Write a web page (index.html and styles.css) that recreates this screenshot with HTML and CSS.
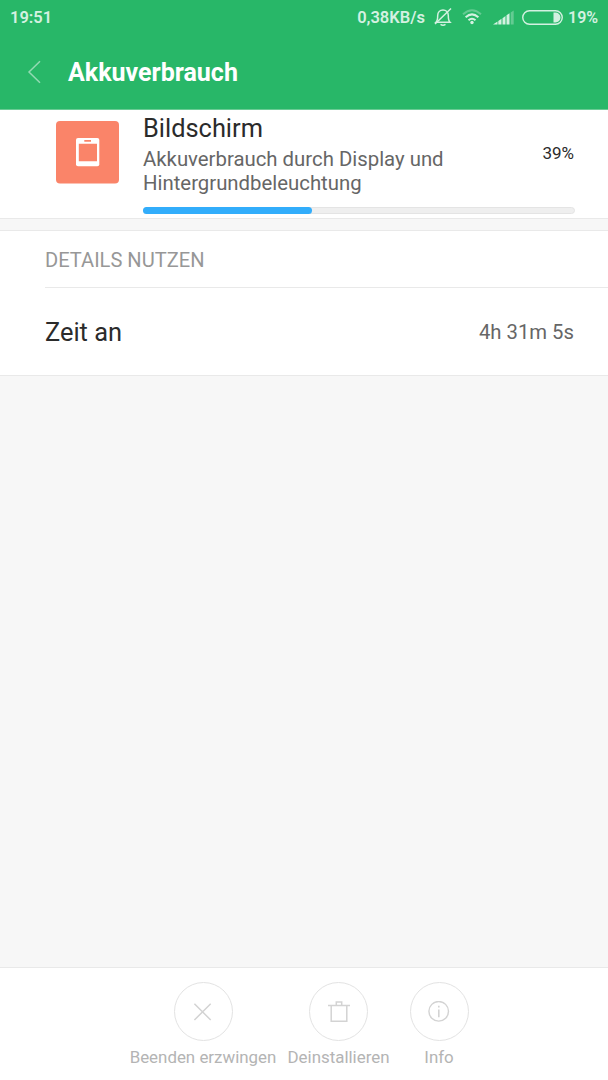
FILE: index.html
```html
<!DOCTYPE html>
<html lang="de">
<head>
<meta charset="utf-8">
<title>Akkuverbrauch</title>
<link rel="stylesheet" href="styles.css">
</head>
<body>
<div class="screen">
  <header class="header">
    <div class="status">
      <span class="clock">19:51</span>
      <span class="speed">0,38KB/s</span>
      <svg class="bell" width="18" height="20" viewBox="0 0 18 20" fill="none" stroke="#d4f1e1" stroke-width="1.5">
        <path d="M2 15.3H16C14.5 13.8 14.3 12 14.3 8.5C14.3 5.3 12 3 9 3S3.7 5.3 3.7 8.5C3.7 12 3.5 13.8 2 15.3Z"/>
        <path d="M6.5 17.3Q9 19 11.5 17.3M1 17L17 1.5"/>
      </svg>
      <svg class="wifi" width="20" height="16" viewBox="0 0 20 16" fill="none" stroke="#d4f1e1" stroke-width="2">
        <path d="M1 5.2Q10-2.7 19 5.2" opacity=".35"/>
        <path d="M3.6 8.2Q10 2.6 16.4 8.2M6.5 11.3Q10 8.2 13.5 11.3"/>
        <circle cx="10" cy="13.5" r="1.7" fill="#d4f1e1" stroke="none"/>
      </svg>
      <svg class="signal" width="21" height="15" viewBox="0 0 21 15" fill="#d4f1e1">
        <path d="M0 14.5L4.5 11.5V14.5ZM5.3 11L8.5 8.8V14.5H5.3ZM9.5 8.2L12.5 6V14.5H9.5ZM13.5 5.3L16.5 3.2V14.5H13.5Z"/>
        <path d="M17.7 2.5L20.7 .5V14.5H17.7Z" opacity=".35"/>
      </svg>
      <svg class="battery" width="41" height="15" viewBox="0 0 41 15">
        <rect x=".75" y=".75" width="39.5" height="13.5" rx="6.75" fill="none" stroke="#d4f1e1" stroke-width="1.4"/>
        <path d="M31.5 2.5H33.5A5 5 0 0 1 33.5 12.5H31.5Z" fill="#d4f1e1"/>
      </svg>
      <span class="level">19%</span>
    </div>
    <div class="titlebar">
      <svg class="back" width="14" height="24" viewBox="0 0 14 24" fill="none" stroke="#93dab3" stroke-width="1.5"><path d="M13 1.2L2 12L13 22.8"/></svg>
      <h1 class="title">Akkuverbrauch</h1>
    </div>
  </header>
  <section class="summary">
    <svg class="app-icon" width="63" height="63" viewBox="0 0 63 63">
      <rect width="63" height="62.5" rx="4" fill="#fa8469"/>
      <rect x="20" y="17" width="23.3" height="28.3" rx="2" fill="#fff"/>
      <path d="M22.8 22.7H41V40.3H22.8ZM28.3 19H35V20.8H28.3Z" fill="#fa8469"/>
    </svg>
    <div class="info">
      <div class="info-row">
        <div>
          <h2 class="name">Bildschirm</h2>
          <p class="desc">Akkuverbrauch durch Display und<br>Hintergrundbeleuchtung</p>
        </div>
        <span class="percent">39%</span>
      </div>
      <div class="track"><div class="fill" style="width:39.2%"></div></div>
    </div>
  </section>
  <section class="details">
    <h3 class="heading">DETAILS NUTZEN</h3>
    <div class="row"><span class="label">Zeit an</span><span class="value">4h 31m 5s</span></div>
  </section>
  <footer class="actions">
    <div class="action force">
      <span class="ring"><svg width="22" height="22" viewBox="0 0 22 22" fill="none" stroke="#d3d3d3" stroke-width="1.5"><path d="M2.4 2.7L18.7 19M18.7 2.7L2.4 19"/></svg></span>
      <span class="caption">Beenden erzwingen</span>
    </div>
    <div class="action uninstall">
      <span class="ring"><svg width="22" height="22" viewBox="0 0 22 22" fill="none" stroke="#d3d3d3" stroke-width="1.5"><path d="M0 4.5H22M3.2 4.5V20.2H18.8V4.5M8.3 4.5V1H13.7V4.5"/></svg></span>
      <span class="caption">Deinstallieren</span>
    </div>
    <div class="action about">
      <span class="ring"><svg width="22" height="22" viewBox="0 0 22 22" fill="none" stroke="#d3d3d3" stroke-width="1.4"><circle cx="10.7" cy="10.3" r="9.8"/><path d="M10.8 8.5V16.3M10.8 4.7V6.5" stroke-width="1.6"/></svg></span>
      <span class="caption">Info</span>
    </div>
  </footer>
</div>
</body>
</html>
```
FILE: styles.css
```css
* { box-sizing: border-box; }
body { margin: 0; font-family: Roboto, "Liberation Sans", sans-serif; }
h1, h2, h3, p { margin: 0; font-weight: 400; }
svg { display: block; flex: none; }
.screen { width: 608px; height: 1080px; display: flex; flex-direction: column; background: #f7f7f7; overflow: hidden; }
.header { height: 110px; background: #28b768; border-bottom: 1px solid #6acb94; flex: none; }
.status { height: 34px; padding: 0 10px; display: flex; align-items: center; color: #d4f1e1; font-size: 16.5px; font-weight: 600; white-space: nowrap; }
.clock { margin-right: auto; }
.speed { margin-right: 9px; }
.bell { margin-right: 10px; }
.wifi { margin-right: 11px; }
.signal { margin-right: 8px; }
.battery { margin-right: 5px; }
.level { width: 30px; font-size: 16px; }
.titlebar { height: 75px; padding: 1px 0 0 27px; display: flex; align-items: center; }
.back { margin-right: 27px; }
.title { font-size: 25px; font-weight: 700; color: #fff; line-height: 30px; padding-top: 2px; }
.summary { height: 109px; flex: none; background: #fff; border-bottom: 1px solid #e9e9e9; padding: 0 33px 0 56px; display: flex; }
.app-icon { margin: 11px 24px 0 0; }
.info { flex: 1; padding-top: 2px; }
.info-row { display: flex; justify-content: space-between; height: 95px; }
.name { font-size: 25.4px; line-height: 32px; color: #2b2b2b; }
.desc { font-size: 20.35px; line-height: 24px; margin-top: 3px; color: #666; white-space: nowrap; }
.percent { font-size: 17px; line-height: 20px; margin: 31px 1px 0 0; color: #2b2b2b; }
.track { height: 7px; border-radius: 4px; background: #efefef; border: 1px solid #e4e4e4; }
.fill { height: 7px; margin: -1px; border-radius: 4px; background: #32adfb; }
.details { margin-top: 11px; height: 146px; flex: none; background: #fff; border: solid #e9e9e9; border-width: 1px 0; padding-left: 45px; }
.heading { height: 57px; font-size: 20.1px; line-height: 58px; color: #979797; border-bottom: 1px solid #e9e9e9; }
.row { height: 87px; padding-right: 34px; display: flex; align-items: center; justify-content: space-between; }
.label { font-size: 25.4px; color: #2b2b2b; }
.value { font-size: 20.3px; color: #666; }
.actions { height: 113px; margin-top: auto; flex: none; background: #fff; border-top: 1px solid #e9e9e9; padding: 14px 0 0 129px; display: flex; gap: 11px; }
.action { display: flex; flex-direction: column; align-items: center; }
.force { width: 148px; }
.uninstall { width: 101px; }
.about { width: 78px; }
.ring { width: 59px; height: 59px; border: 1px solid #e3e3e3; border-radius: 50%; display: flex; align-items: center; justify-content: center; }
.caption { margin-top: 5px; font-size: 16.9px; line-height: 22px; color: #b4b4b4; white-space: nowrap; }
```
